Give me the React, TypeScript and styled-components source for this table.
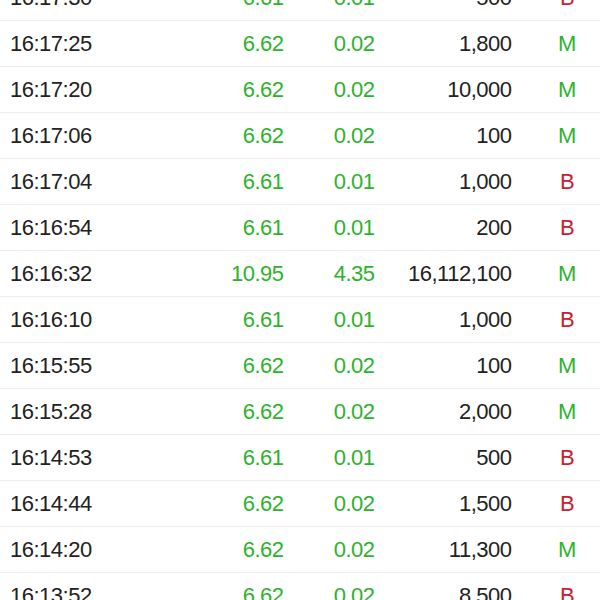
import styled, { createGlobalStyle } from "styled-components";

const GlobalStyle = createGlobalStyle`
  html, body {
    margin: 0;
    padding: 0;
    background: #ffffff;
    overflow: hidden;
  }
  body {
    font-family: "Liberation Sans", Arial, sans-serif;
  }
`;

type Side = "M" | "B";

interface Trade {
  time: string;
  price: string;
  change: string;
  volume: string;
  side: Side;
}

const trades: Trade[] = [
  { time: "16:17:30", price: "6.61", change: "0.01", volume: "500", side: "B" },
  { time: "16:17:25", price: "6.62", change: "0.02", volume: "1,800", side: "M" },
  { time: "16:17:20", price: "6.62", change: "0.02", volume: "10,000", side: "M" },
  { time: "16:17:06", price: "6.62", change: "0.02", volume: "100", side: "M" },
  { time: "16:17:04", price: "6.61", change: "0.01", volume: "1,000", side: "B" },
  { time: "16:16:54", price: "6.61", change: "0.01", volume: "200", side: "B" },
  { time: "16:16:32", price: "10.95", change: "4.35", volume: "16,112,100", side: "M" },
  { time: "16:16:10", price: "6.61", change: "0.01", volume: "1,000", side: "B" },
  { time: "16:15:55", price: "6.62", change: "0.02", volume: "100", side: "M" },
  { time: "16:15:28", price: "6.62", change: "0.02", volume: "2,000", side: "M" },
  { time: "16:14:53", price: "6.61", change: "0.01", volume: "500", side: "B" },
  { time: "16:14:44", price: "6.62", change: "0.02", volume: "1,500", side: "B" },
  { time: "16:14:20", price: "6.62", change: "0.02", volume: "11,300", side: "M" },
  { time: "16:13:52", price: "6.62", change: "0.02", volume: "8,500", side: "B" },
];

const GREEN = "#2db22d";
const RED = "#c8202e";

const List = styled.div`
  width: 600px;
  height: 625px;
  margin-top: -25px;
  display: flex;
  flex-direction: column;
`;

const Row = styled.div`
  display: grid;
  grid-template-columns: 150px 124px 91px 137px 88px;
  align-items: center;
  height: 45px;
  flex-shrink: 0;
  padding-left: 10px;
  border-bottom: 1px solid #ededed;
  font-size: 22px;
  letter-spacing: -0.5px;
  color: #222222;
`;

const Time = styled.span`
  text-align: left;
`;

const Num = styled.span<{ green?: boolean }>`
  text-align: right;
  margin-right: 0.5px;
  color: ${({ green }) => (green ? GREEN : "#222222")};
`;

const Flag = styled.span<{ side: Side }>`
  padding-left: 22px;
  text-align: center;
  color: ${({ side }) => (side === "M" ? GREEN : RED)};
`;

export default function App() {
  return (
    <>
      <GlobalStyle />
      <List>
        {trades.map((t, i) => (
          <Row key={i}>
            <Time>{t.time}</Time>
            <Num green>{t.price}</Num>
            <Num green>{t.change}</Num>
            <Num>{t.volume}</Num>
            <Flag side={t.side}>{t.side}</Flag>
          </Row>
        ))}
      </List>
    </>
  );
}
